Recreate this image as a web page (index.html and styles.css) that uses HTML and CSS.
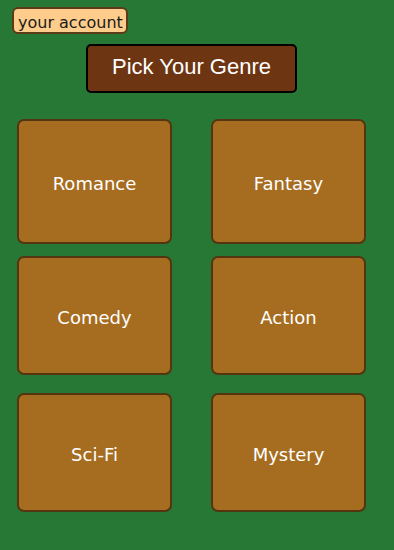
FILE: index.html
```html
<!DOCTYPE html>
<html>
<head>
    <title>Pick Your Genre</title>
    <link rel="stylesheet" href="styles.css">
</head>
<body>
    <div class="page">
        <div class="top-bar">
            <button class="account-btn">your account</button>
        </div>
        <div class="title-row">
            <button class="title-btn">Pick Your Genre</button>
        </div>
        <div class="genre-grid">
            <button class="genre tall">Romance</button>
            <button class="genre tall">Fantasy</button>
            <button class="genre">Comedy</button>
            <button class="genre">Action</button>
            <button class="genre">Sci-Fi</button>
            <button class="genre">Mystery</button>
        </div>
    </div>
</body>
</html>
```

FILE: styles.css
```css
html, body {
    margin: 0;
    background-color: #267834;
}
.page {
    width: 383px;
    height: 550px;
}
.top-bar {
    padding: 7px 0 0 12px;
}
.account-btn {
    font-family: "DejaVu Sans", Verdana, sans-serif;
    font-size: 16px;
    line-height: 19px;
    padding: 4px 3px 0 4px;
    color: #1a1a1a;
    background-color: #fecd8c;
    border: 2px solid #5c3b18;
    border-radius: 6px;
    display: block;
}
.title-row {
    display: flex;
    justify-content: center;
    margin-top: 10px;
}
.title-btn {
    width: 211px;
    height: 49px;
    font-family: "Liberation Sans", Arial, sans-serif;
    font-size: 22px;
    color: #ffffff;
    background-color: #6e3512;
    border: 2px solid #000000;
    border-radius: 5px;
    padding: 0 0 4px 0;
}
.genre-grid {
    display: grid;
    grid-template-columns: 155px 155px;
    grid-auto-rows: 137px;
    column-gap: 39px;
    justify-content: center;
    align-items: start;
    margin-top: 26px;
}
.genre {
    height: 119px;
    font-family: "DejaVu Sans", Verdana, sans-serif;
    font-size: 18px;
    color: #ffffff;
    background-color: #a66d20;
    border: 2px solid #553510;
    border-radius: 7px;
    padding: 4px 0 0 0;
}
.genre.tall {
    height: 125px;
}
```
